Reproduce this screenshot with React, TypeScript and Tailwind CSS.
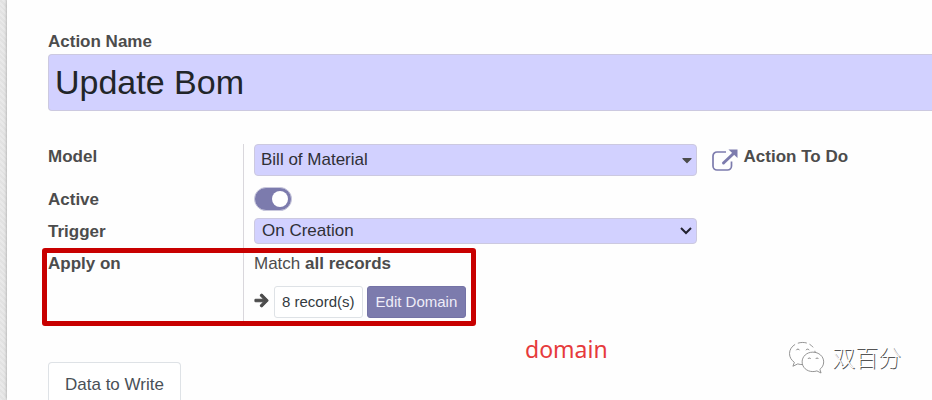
import { useState, type ReactNode } from "react";
import { FaArrowRight, FaCaretDown } from "react-icons/fa";

function ExternalLinkIcon() {
  return (
    <svg viewBox="0 0 26 22" className="h-[22px] w-[26px]" fill="none" stroke="#7c7bad" aria-hidden="true">
      <path d="M14 3H5A4 4 0 0 0 1 7V17a4 4 0 0 0 4 4h10.500a4 4 0 0 0 4-4v-4.500" strokeWidth="1.700" />
      <path d="M11.500 14 21 5" strokeWidth="3" strokeLinecap="round" />
      <path d="M16.500 0.500H25.500V9z" fill="#7c7bad" stroke="none" />
    </svg>
  );
}

function ChatBubbles() {
  return (
    <svg viewBox="0 0 38 34" className="h-[33px] w-[37px]" fill="none" aria-hidden="true">
      <g fill="#fff" stroke="#858585" strokeWidth="0.9" strokeLinejoin="round">
        <path
          d="M15 1.500C7.500 1.500 1.500 6.500 1.500 13c0 3.700 2 6.800 5 9L5 26l5-2.400c1.600.5 3.300.7 5 .7 7.500 0 13-5 13-11.300S22.500 1.500 15 1.500z"
          strokeDasharray="5 3 50 3 6 4"
        />
        <path d="M25.500 11.500c-6.300 0-11 4.400-11 10s4.700 10 11 10c1.500 0 2.900-.2 4.200-.7L34 33l-1.200-3.800c2.400-1.800 3.900-4.500 3.900-7.700 0-5.600-4.900-10-11.200-10z" />
      </g>
      <g stroke="#777" strokeWidth="0.900">
        <path d="M8.500 9.500a1.700 1.700 0 0 1 3.200 0M18.500 9.500a1.700 1.700 0 0 1 3.200 0" />
        <path d="M20.500 18.500a1.500 1.500 0 0 1 2.800 0M28.500 18.500a1.500 1.500 0 0 1 2.800 0" />
      </g>
    </svg>
  );
}

type FieldRowProps = {
  label: string;
  htmlFor?: string;
  labelClass?: string;
  className?: string;
  children: ReactNode;
};

function FieldRow({ label, htmlFor, labelClass = "pt-[5px]", className = "", children }: FieldRowProps) {
  return (
    <div className={`relative flex ${className}`}>
      <div className={`w-[196px] shrink-0 border-r border-[#d9d7dc] ${labelClass}`}>
        <label htmlFor={htmlFor} className="block font-bold leading-6">
          {label}
        </label>
      </div>
      <div className="min-w-0 flex-1 pl-[10px]">{children}</div>
    </div>
  );
}

export default function App() {
  const [name, setName] = useState("Update Bom");
  const [active, setActive] = useState(true);

  return (
    <div className="flex h-screen overflow-hidden bg-[#e6e6e6] bg-[repeating-linear-gradient(45deg,#e9e9e9_0_2px,#e2e2e2_2px_4px)] pl-[7px] font-['Liberation_Sans',Arial,sans-serif] text-[17px] text-[#4c4c4c]">
      <main className="relative flex-1 bg-[#fefefe] pl-[41px] pt-[30px] shadow-[0_0_3px_#999]">
        <label htmlFor="name" className="block font-bold leading-6">
          Action Name
        </label>
        <input
          id="name"
          className="block h-[57px] w-full rounded-l border border-r-0 border-[#ccc9e0] bg-[#d2d1ff] px-[6px] text-[34px] text-[#212529] outline-none"
          value={name}
          onChange={(e) => setName(e.target.value)}
        />

        <div className="mt-[33px] grid grid-cols-[11fr_3fr]">
          <section>
            <FieldRow label="Model" htmlFor="model" labelClass="pt-px" className="h-[39px]">
              <div className="flex items-start">
                <div className="relative flex-1">
                  <select
                    id="model"
                    className="h-8 w-full appearance-none rounded border border-[#ccc9e0] bg-[#d2d1ff] px-[6px] text-[17px] text-[#2f2f36]"
                  >
                    <option>Bill of Material</option>
                  </select>
                  <FaCaretDown className="pointer-events-none absolute right-[3px] top-2 h-4 w-[14px] text-[#4c4c4c]" />
                </div>
                <button type="button" aria-label="External link" className="ml-[15px] mr-[5px] mt-[5px]">
                  <ExternalLinkIcon />
                </button>
              </div>
            </FieldRow>

            <FieldRow label="Active" htmlFor="active" className="h-8">
              <span className="relative mt-1 block h-6 w-[38px]">
                <input
                  id="active"
                  type="checkbox"
                  role="switch"
                  checked={active}
                  onChange={(e) => setActive(e.target.checked)}
                  className="peer block h-6 w-[38px] appearance-none rounded-full border border-[#c9c8dd] bg-[#ccc] checked:bg-[#7c7bad]"
                />
                <span className="pointer-events-none absolute left-1 top-1 size-4 rounded-full bg-white peer-checked:left-[18px]" />
              </span>
            </FieldRow>

            <FieldRow label="Trigger" htmlFor="trigger" className="h-8">
              <div className="relative mr-[46px] mt-[3px]">
                <select
                  id="trigger"
                  className="block h-[26px] w-full appearance-none rounded border border-[#ccc9e0] bg-[#d2d1ff] px-[7px] text-[17px] leading-6 text-[#2f2f36]"
                >
                  <option>On Creation</option>
                </select>
                <svg
                  viewBox="0 0 12 8"
                  className="pointer-events-none absolute right-[5px] top-[9px] h-2 w-3"
                  fill="none"
                  stroke="#222230"
                  strokeWidth="2"
                >
                  <path d="m1 1 5 5 5-5" />
                </svg>
              </div>
            </FieldRow>

            <FieldRow label="Apply on" className="h-[75px]">
              <p className="pt-[5px] leading-6">
                Match <strong>all records</strong>
              </p>
              <div className="mt-[10px] flex items-center">
                <FaArrowRight
                  className="mb-1 mr-[5px] size-[15px] overflow-visible"
                  stroke="currentColor"
                  strokeWidth={36}
                />
                <button
                  type="button"
                  className="h-8 rounded-[3px] border border-[#dee2e6] bg-white px-[7px] text-[15px] text-[#333a40]"
                >
                  8 record(s)
                </button>
                <button
                  type="button"
                  className="ml-1 h-8 rounded-[3px] border border-[#7473a6] bg-[#7c7bad] px-2 text-[15px] text-[#eeedf8]"
                >
                  Edit Domain
                </button>
              </div>
              <div className="pointer-events-none absolute -left-[6px] top-px h-[78px] w-[434px] rounded-[3px] border-[5px] border-[#c80000]" />
              <span className="absolute left-[477px] top-[86px] font-['Noto_Sans',sans-serif] text-[23px] leading-8 text-[#e63a3c]">
                domain
              </span>
            </FieldRow>
          </section>

          <section>
            <h2 className="pl-px pt-px font-bold leading-6">Action To Do</h2>
          </section>
        </div>

        <div role="tablist" className="mt-[40px] flex">
          <button
            type="button"
            role="tab"
            aria-selected="true"
            className="h-12 rounded-t border border-b-0 border-[#dee2e6] bg-white px-4 pb-1 text-[17px] text-[#495057]"
          >
            Data to Write
          </button>
        </div>

        <div className="absolute bottom-[26px] right-[31px] flex items-center gap-[7px]">
          <ChatBubbles />
          <span className="-mt-1 font-['Noto_Sans_CJK_SC',sans-serif] text-[23px] font-light leading-8 text-white [text-shadow:1px_1px_0_#555]">
            双百分
          </span>
        </div>
      </main>
    </div>
  );
}
